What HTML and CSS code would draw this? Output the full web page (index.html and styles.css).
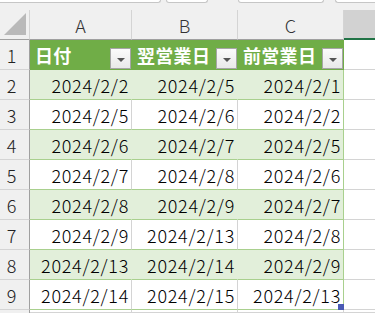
FILE: index.html
```html
<!DOCTYPE html>
<html lang="ja">
<head>
<meta charset="utf-8">
<link rel="stylesheet" href="styles.css">
</head>
<body>
<div class="top">
  <div class="tab t1"></div>
  <div class="tab t2"></div>
  <div class="tab t3"></div>
  <div class="tab t4"></div>
</div>
<div class="sheet">
  <div class="corner"><svg width="22" height="22" viewBox="0 0 22 22"><polygon points="22,0 22,22 0,22" fill="#b9b9b9"/></svg></div>
  <div class="colhead">A</div>
  <div class="colhead">B</div>
  <div class="colhead">C</div>
  <div class="colhead sel"></div>

  <div class="rowhead">1</div>
  <div class="cell th"><span>日付</span><span class="dd"></span></div>
  <div class="cell th"><span>翌営業日</span><span class="dd"></span></div>
  <div class="cell th last"><span>前営業日</span><span class="dd"></span></div>
  <div class="cell out"></div>

  <div class="rowhead">2</div>
  <div class="cell band">2024/2/2</div>
  <div class="cell band">2024/2/5</div>
  <div class="cell band last">2024/2/1</div>
  <div class="cell out"></div>

  <div class="rowhead">3</div>
  <div class="cell plain">2024/2/5</div>
  <div class="cell plain">2024/2/6</div>
  <div class="cell plain last">2024/2/2</div>
  <div class="cell out"></div>

  <div class="rowhead">4</div>
  <div class="cell band">2024/2/6</div>
  <div class="cell band">2024/2/7</div>
  <div class="cell band last">2024/2/5</div>
  <div class="cell out"></div>

  <div class="rowhead">5</div>
  <div class="cell plain">2024/2/7</div>
  <div class="cell plain">2024/2/8</div>
  <div class="cell plain last">2024/2/6</div>
  <div class="cell out"></div>

  <div class="rowhead">6</div>
  <div class="cell band">2024/2/8</div>
  <div class="cell band">2024/2/9</div>
  <div class="cell band last">2024/2/7</div>
  <div class="cell out"></div>

  <div class="rowhead">7</div>
  <div class="cell plain">2024/2/9</div>
  <div class="cell plain">2024/2/13</div>
  <div class="cell plain last">2024/2/8</div>
  <div class="cell out"></div>

  <div class="rowhead">8</div>
  <div class="cell band">2024/2/13</div>
  <div class="cell band">2024/2/14</div>
  <div class="cell band last">2024/2/9</div>
  <div class="cell out"></div>

  <div class="rowhead">9</div>
  <div class="cell plain">2024/2/14</div>
  <div class="cell plain">2024/2/15</div>
  <div class="cell plain last handle-cell">2024/2/13<span class="handle"></span></div>
  <div class="cell out"></div>

  <div class="rowhead short"></div>
  <div class="cell blank short"></div>
  <div class="cell blank short"></div>
  <div class="cell blank short"></div>
  <div class="cell out short"></div>
</div>
</body>
</html>
```

FILE: styles.css
```css
html, body {
  margin: 0;
  padding: 0;
  background: #ffffff;
  overflow: hidden;
}

body {
  font-family: "Noto Sans CJK JP", "Noto Sans", sans-serif;
  color: #000;
}

.top {
  height: 10px;
  background: #f0f0f0;
  display: flex;
  align-items: flex-start;
}

.tab {
  height: 2px;
  background: #fff;
  border-bottom: 1px solid #c6c6c6;
  border-left: 1px solid #c6c6c6;
  border-right: 1px solid #c6c6c6;
  border-radius: 0 0 4px 4px;
}

.t1 { width: 160px; border-left: none; border-radius: 0 0 4px 0; }
.t2 { width: 40px; margin-left: 5px; }
.t3 { width: 84px; margin-left: 30px; }
.t4 { flex: 1; margin-left: 11px; border-right: none; border-radius: 0 0 0 4px; }

.sheet {
  display: grid;
  grid-template-columns: 30px 102px 106px 106px 1fr;
  grid-template-rows: repeat(10, 30px) 3px;
}

.sheet > div {
  box-sizing: border-box;
}

.sheet > .short {
  border-bottom: none;
}

.corner {
  background: #f0f0f0;
  border-right: 1px solid #d4d4d4;
  border-bottom: 1px solid #a0a0a0;
  display: flex;
  align-items: flex-end;
  justify-content: flex-end;
  padding: 0 3px 4px 0;
}

.corner svg {
  display: block;
}

.colhead {
  background: #f0f0f0;
  border-right: 1px solid #d4d4d4;
  border-bottom: 1px solid #a0a0a0;
  display: flex;
  align-items: center;
  justify-content: center;
  font-size: 18px;
  font-weight: 300;
  line-height: 1;
  color: #333;
}

.colhead.sel {
  background: #d2d2d2;
  border-right: none;
  border-bottom: 2px solid #217346;
}

.rowhead {
  background: #f0f0f0;
  border-right: 1px solid #a0a0a0;
  border-bottom: 1px solid #d4d4d4;
  display: flex;
  align-items: center;
  justify-content: center;
  padding-right: 6px;
  font-size: 18px;
  font-weight: 300;
  line-height: 1;
  color: #222;
}

.cell {
  display: flex;
  align-items: center;
  justify-content: flex-end;
  padding-right: 2px;
  font-size: 18px;
  font-weight: 300;
  letter-spacing: 0.7px;
  line-height: 1;
  white-space: nowrap;
}

.cell.th {
  background: #70ad47;
  color: #fff;
  font-weight: bold;
  letter-spacing: 0.3px;
  justify-content: space-between;
  padding: 0 0 0 5px;
  border-right: 1px solid #70ad47;
  border-bottom: 1px solid #70ad47;
}

.cell.band {
  background: #e2efda;
  border-right: 1px solid #e2efda;
  border-bottom: 1px solid #a9d08e;
}

.cell.plain {
  background: #fff;
  border-right: 1px solid #d4d4d4;
  border-bottom: 1px solid #a9d08e;
}

.cell.blank {
  background: #fff;
  border-right: 1px solid #d4d4d4;
  border-bottom: 1px solid #d4d4d4;
}

.cell.last {
  border-right: 1px solid #a9d08e;
}

.cell.th.last {
  border-right: 1px solid #70ad47;
}

.cell.out {
  background: #fff;
  border-bottom: 1px solid #d4d4d4;
}

.dd {
  align-self: flex-end;
  width: 21px;
  height: 21px;
  box-sizing: border-box;
  border: 1px solid #a6a6a6;
  background: linear-gradient(#fbfbfb, #e9e9e9);
  display: flex;
  align-items: center;
  justify-content: center;
}

.dd::after {
  content: "";
  display: block;
  width: 0;
  height: 0;
  margin-top: 2px;
  border-left: 4px solid transparent;
  border-right: 4px solid transparent;
  border-top: 4px solid #555;
}

.handle-cell {
  position: relative;
}

.handle {
  position: absolute;
  right: -1px;
  bottom: -1px;
  width: 6px;
  height: 6px;
  background: #4a5ab4;
}
```
